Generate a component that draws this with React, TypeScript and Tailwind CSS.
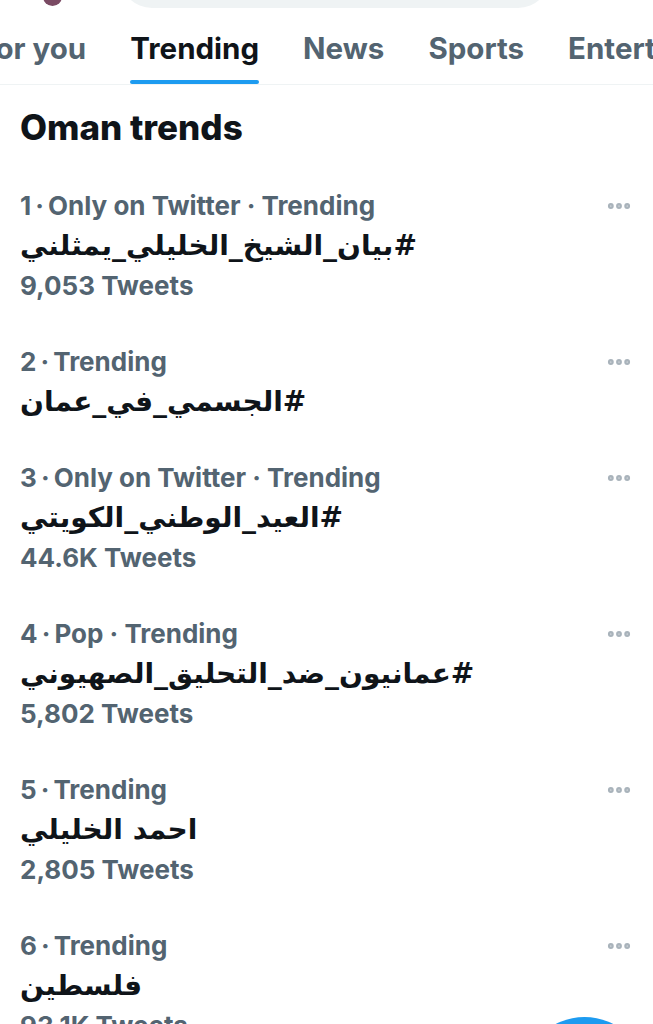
import { MoreHorizontal } from "lucide-react";

type Trend = {
  rank: number;
  context: string;
  name: string;
  count?: string;
};

const trends: Trend[] = [
  { rank: 1, context: "Only on Twitter · Trending", name: "#بيان_الشيخ_الخليلي_يمثلني", count: "9,053 Tweets" },
  { rank: 2, context: "Trending", name: "#الجسمي_في_عمان" },
  { rank: 3, context: "Only on Twitter · Trending", name: "#العيد_الوطني_الكويتي", count: "44.6K Tweets" },
  { rank: 4, context: "Pop · Trending", name: "#عمانيون_ضد_التحليق_الصهيوني", count: "5,802 Tweets" },
  { rank: 5, context: "Trending", name: "احمد الخليلي", count: "2,805 Tweets" },
  { rank: 6, context: "Trending", name: "فلسطين", count: "93.1K Tweets" },
];

const tabs = ["For you", "Trending", "News", "Sports", "Entertainment"];

function TrendRow({ trend }: { trend: Trend }) {
  return (
    <div className="flex items-start justify-between pl-[20px] pr-[20px] pt-[18px] pb-[18px]">
      <div className="min-w-0 flex-1">
        <div className="text-[26px] font-bold leading-[40px] text-[#536471] whitespace-nowrap">
          {trend.rank}
          {"\u2009·\u2009"}
          {trend.context}
        </div>
        <div
          dir="auto"
          className="text-left text-[28px] font-bold leading-[40px] text-[#0f1419] whitespace-nowrap"
          style={{ fontFamily: '"DejaVu Sans", sans-serif' }}
        >
          {trend.name}
        </div>
        {trend.count && (
          <div className="text-[26px] font-bold leading-[40px] text-[#536471]">
            {trend.count}
          </div>
        )}
      </div>
      <div className="flex h-[40px] items-center">
        <MoreHorizontal className="h-[28px] w-[28px] text-[#a9b3bb]" strokeWidth={3} />
      </div>
    </div>
  );
}

export default function App() {
  return (
    <div
      className="relative h-[1024px] w-[653px] overflow-hidden bg-white"
      style={{ fontFamily: 'Inter, "Liberation Sans", sans-serif' }}
    >
      {/* top bar, mostly scrolled off */}
      <div className="-mt-[56px] flex h-[64px] items-center gap-[58px] pl-[43px] pr-[103px]">
        <div className="h-[59px] w-[19px] rounded-full bg-[#7a4a63]" />
        <div className="h-[64px] flex-1 rounded-full bg-[#eff3f4]" />
      </div>

      {/* tabs */}
      <div className="border-b border-[#eff3f4]">
        <div className="-ml-[21px] flex h-[76px] items-stretch gap-[44px] whitespace-nowrap">
          {tabs.map((tab) => {
            const active = tab === "Trending";
            return (
              <div key={tab} className="relative flex items-center pt-[4px]">
                <span
                  className={
                    active
                      ? "text-[29.5px] font-bold text-[#0f1419]"
                      : "text-[29.5px] font-bold text-[#536471]"
                  }
                >
                  {tab}
                </span>
                {active && (
                  <div className="absolute bottom-0 left-0 right-0 h-[4px] rounded-full bg-[#1d9bf0]" />
                )}
              </div>
            );
          })}
        </div>
      </div>

      <h2 className="pl-[20px] pt-[22px] pb-[21px] text-[35px] font-extrabold leading-[40px] text-[#0f1419]">
        Oman trends
      </h2>

      <div>
        {trends.map((t) => (
          <TrendRow key={t.rank} trend={t} />
        ))}
      </div>

      <div className="absolute left-[522px] top-[1017px] h-[125px] w-[125px] rounded-full bg-[#1d9bf0]" />
    </div>
  );
}
